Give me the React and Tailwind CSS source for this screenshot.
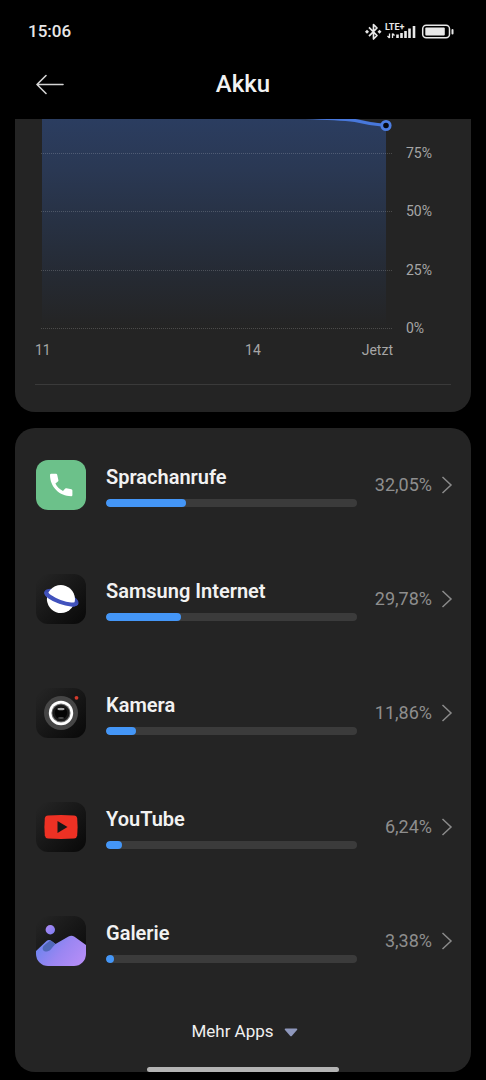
const APPS = [
  { name: 'Sprachanrufe', share: 32.05, label: '32,05%', Icon: PhoneIcon },
  { name: 'Samsung Internet', share: 29.78, label: '29,78%', Icon: InternetIcon },
  { name: 'Kamera', share: 11.86, label: '11,86%', Icon: CameraIcon },
  { name: 'YouTube', share: 6.24, label: '6,24%', Icon: YouTubeIcon },
  { name: 'Galerie', share: 3.38, label: '3,38%', Icon: GalleryIcon },
];

const LEVELS = ['75%', '50%', '25%', '0%'];
const GRID_Y = [34, 92, 151, 209];

// Dark rounded tile shared by most app icons
function DarkTile({ id }) {
  return (
    <>
      <defs>
        <linearGradient id={id} x1="0" y1="0" x2="1" y2="1">
          <stop offset="0" stopColor="#262626" />
          <stop offset="0.4" stopColor="#1a1a1a" />
          <stop offset="1" stopColor="#080808" />
        </linearGradient>
      </defs>
      <rect width="50" height="50" rx="12" fill={`url(#${id})`} />
    </>
  );
}

function PhoneIcon() {
  return (
    <svg viewBox="0 0 50 50" className="size-full" aria-hidden="true">
      <rect width="50" height="50" rx="12" fill="#6cc18a" />
      <path
        fill="#fff"
        d="M15.2 13.800H20Q21 13.800 21.200 14.800L22.400 20.200Q22.500 21 21.900 21.500L19.400 23.500C21.200 27 23.600 29.300 27 31L29.200 28.600Q29.700 28 30.500 28.200L35.400 29.200Q36.400 29.400 36.400 30.400V35Q36.400 36.200 35.200 36.200C23.500 36.200 14 27 14 15Q14 13.800 15.200 13.800z"
      />
    </svg>
  );
}

function InternetIcon() {
  return (
    <svg viewBox="0 0 50 50" className="size-full" aria-hidden="true">
      <DarkTile id="tile-internet" />
      <g transform="rotate(20 25 24)">
        <ellipse cx="25.300" cy="23.500" rx="16" ry="4.500" fill="none" stroke="#3b4bb0" strokeWidth="4" />
        <circle cx="25.300" cy="25" r="14" fill="#fff" />
        <path
          d="M9.300 23.500c0 2.500 7.200 4.500 16 4.500s16-2 16-4.500"
          fill="none"
          stroke="#4152bd"
          strokeWidth="4.200"
        />
      </g>
    </svg>
  );
}

function CameraIcon() {
  return (
    <svg viewBox="0 0 50 50" className="size-full" aria-hidden="true">
      <DarkTile id="tile-camera" />
      <circle cx="25" cy="25" r="17" fill="#454545" />
      <circle cx="25" cy="25" r="12.200" fill="#fff" />
      <circle cx="25" cy="25" r="9.600" fill="#777" />
      <circle cx="25" cy="25" r="8.600" fill="#1a1a1a" />
      <circle cx="25" cy="25" r="6.200" fill="#050505" />
      <ellipse cx="25" cy="21" rx="3.600" ry="1.300" fill="#a5a5a5" />
      <ellipse cx="25" cy="30" rx="3" ry="1" fill="#4c4c4c" />
      <circle cx="40.500" cy="9.800" r="1.900" fill="#d33a2c" />
    </svg>
  );
}

function YouTubeIcon() {
  return (
    <svg viewBox="0 0 50 50" className="size-full" aria-hidden="true">
      <DarkTile id="tile-youtube" />
      <path
        fill="#ee3124"
        d="M12 13.500Q25 12.700 38 13.500Q40.800 13.700 41.200 16.500Q42 25 41.200 33.500Q40.800 36.200 38 36.500Q25 37.300 12 36.500Q9.200 36.200 8.800 33.500Q8 25 8.800 16.500Q9.200 13.700 12 13.500Z"
      />
      <path fill="#171717" d="M21.500 19v12L31.500 25z" />
    </svg>
  );
}

function GalleryIcon() {
  return (
    <svg viewBox="0 0 50 50" className="size-full" aria-hidden="true">
      <DarkTile id="tile-gallery" />
      <defs>
        <linearGradient id="hills" x1="0" y1="0.2" x2="1" y2="0.7">
          <stop offset="0" stopColor="#6684ee" />
          <stop offset="0.55" stopColor="#9b86f2" />
          <stop offset="1" stopColor="#b48df6" />
        </linearGradient>
        <linearGradient id="moon" x1="0" y1="0" x2="1" y2="1">
          <stop offset="0" stopColor="#b08af5" />
          <stop offset="1" stopColor="#7b7df0" />
        </linearGradient>
      </defs>
      <circle cx="14.300" cy="13.700" r="4.700" fill="url(#moon)" />
      <path
        fill="url(#hills)"
        d="M0 35L10.500 25Q13 23 15.500 25L19.500 28L32.500 20.500Q35.500 18.700 38.500 20.700L50 29V38a12 12 0 0 1-12 12H12A12 12 0 0 1 0 38z"
      />
      <path
        fill="#5068b8"
        d="M14.500 24.300L19.500 28C17 30 15 35 11 35.500C7 36 5.600 32.500 7.500 30C9 28.500 12 26.500 14.500 24.300z"
      />
    </svg>
  );
}

function StatusBar() {
  return (
    <div className="flex h-16 items-center justify-between pr-[30px] pl-7 text-[17px] font-medium text-[#e8e8e8]">
      <span>15:06</span>
      <svg width="92" height="20" viewBox="0 0 92 20" aria-hidden="true">
        {/* Bluetooth */}
        <path
          d="M5 5.300L13 13.500L9.500 17V2.500L13 6L5 14.200"
          fill="none"
          stroke="currentColor"
          strokeWidth="1.700"
          strokeLinejoin="round"
        />
        <path d="M3 7.700l2 2l-2 2l-2-2zM15.500 7.700l2 2l-2 2l-2-2z" fill="currentColor" />
        <text x="21" y="8" fontSize="9" fontWeight="700" fill="currentColor">
          LTE+
        </text>
        {/* Data arrows and signal strength */}
        <path d="M25.500 11.500v4.500M23.500 14l2 2M28.500 11.500V16M30.500 13.500l-2-2" stroke="currentColor" strokeWidth="1.300" />
        <path
          d="M33.500 16v-3.500M37.500 16v-5M41.500 16V9M45.500 16V6.500M50 16V4"
          stroke="currentColor"
          strokeWidth="2.600"
        />
        {/* Battery */}
        <rect x="58.700" y="3.200" width="26.800" height="12.600" rx="3.500" fill="none" stroke="currentColor" strokeWidth="1.500" />
        <rect x="61.300" y="5.500" width="19.500" height="8" rx="1" fill="currentColor" />
        <path d="M88.500 8v3.400" stroke="currentColor" strokeWidth="2" strokeLinecap="round" />
      </svg>
    </div>
  );
}

function Header() {
  return (
    <header className="grid h-[55px] grid-cols-[1fr_auto_1fr] items-start px-9">
      <button type="button" aria-label="Zurück" className="w-7 pt-2">
        <svg width="28" height="24" viewBox="0 0 28 24" fill="none" stroke="#d4d4d4" strokeWidth="1.600">
          <path d="M27 12.500H1M10 3.500L1 12.500L10 21.500" strokeLinecap="round" strokeLinejoin="round" />
        </svg>
      </button>
      <h1 className="pt-1 text-2xl leading-8 font-medium text-[#f2f2f2]">Akku</h1>
    </header>
  );
}

function BatteryChart() {
  return (
    <section className="rounded-b-[20px] bg-[#242424] px-5 pb-[27px] text-sm text-[#a6a6a6]">
      <div className="flex">
        <svg viewBox="0 0 358 219" className="block min-w-0 flex-1" role="img" aria-label="Akkustand">
          <defs>
            <linearGradient id="level" x1="0" y1="0" x2="0" y2="1">
              <stop offset="0" stopColor="#2b3d60" />
              <stop offset="0.25" stopColor="#2a3853" />
              <stop offset="0.5" stopColor="#273143" />
              <stop offset="0.75" stopColor="#252a33" />
              <stop offset="1" stopColor="#242424" />
            </linearGradient>
          </defs>
          <path d="M7 0H322L351 6V208H7z" fill="url(#level)" />
          {GRID_Y.map((y) => (
            <path key={y} d={`M6 ${y + 0.5}H357`} stroke="#fff" strokeOpacity="0.18" strokeDasharray="1 1" />
          ))}
          <path
            d="M270 -1.500C298 -0.500 306 0 320 1.500C332 4.500 338 5.500 351 6.500"
            fill="none"
            stroke="#4878dc"
            strokeWidth="3"
          />
          <circle cx="351" cy="6.500" r="4.200" fill="#05070d" stroke="#4c7de0" strokeWidth="2.800" />
        </svg>
        <div className="flex w-[58px] flex-col justify-between pt-6 pl-[13px]">
          {LEVELS.map((level) => (
            <span key={level}>{level}</span>
          ))}
        </div>
      </div>
      <div className="mr-[58px] grid grid-cols-[9fr_5fr_auto] pt-[2px] pb-6">
        <span>11</span>
        <span>14</span>
        <span>Jetzt</span>
      </div>
      <hr className="border-[#3a3a3a]" />
    </section>
  );
}

function AppRow({ name, share, label, Icon }) {
  return (
    <li>
      <button type="button" className="flex h-[114px] w-full items-center text-left">
        <span className="size-[50px] shrink-0">
          <Icon />
        </span>
        <span className="ml-5 flex-1">
          <span className="block text-xl leading-7 font-semibold text-[#f2f2f2]">{name}</span>
          <span className="mt-2 block h-2 overflow-hidden rounded-full bg-[#3b3b3b]">
            <span className="block h-full min-w-2 rounded-full bg-[#4496f7]" style={{ width: `${share}%` }} />
          </span>
        </span>
        <span className="w-[75px] text-right text-lg text-[#8e8e8e]">{label}</span>
        <svg width="12" height="18" viewBox="0 0 12 18" fill="none" className="ml-[9px] shrink-0" aria-hidden="true">
          <path d="M1.500 1L10 9L1.500 17" stroke="#8a8a8a" strokeWidth="1.500" />
        </svg>
      </button>
    </li>
  );
}

export default function App() {
  return (
    <div className="relative min-h-screen bg-black pb-2 font-[Roboto,sans-serif]">
      <StatusBar />
      <Header />
      <main className="flex flex-col gap-4 px-[15px]">
        <BatteryChart />
        <section className="rounded-[20px] bg-[#242424] pr-[18px] pb-5 pl-[21px]">
          <ul>
            {APPS.map((app) => (
              <AppRow key={app.name} {...app} />
            ))}
          </ul>
          <button type="button" className="mx-auto mt-[14px] flex h-10 items-center gap-[10px] text-[17px] text-[#f0f0f0]">
            Mehr Apps
            <svg width="14" height="9" viewBox="0 0 14 9" aria-hidden="true">
              <path d="M1.500 0.500H12.500Q14 0.800 13 2L8 7.700Q7 8.700 6 7.700L1 2Q0 0.800 1.500 0.500z" fill="#8f98bd" />
            </svg>
          </button>
        </section>
      </main>
      {/* Gesture bar */}
      <div className="absolute bottom-2 left-1/2 h-[5px] w-48 -translate-x-1/2 rounded-full bg-[#b4b4b4]" />
    </div>
  );
}
